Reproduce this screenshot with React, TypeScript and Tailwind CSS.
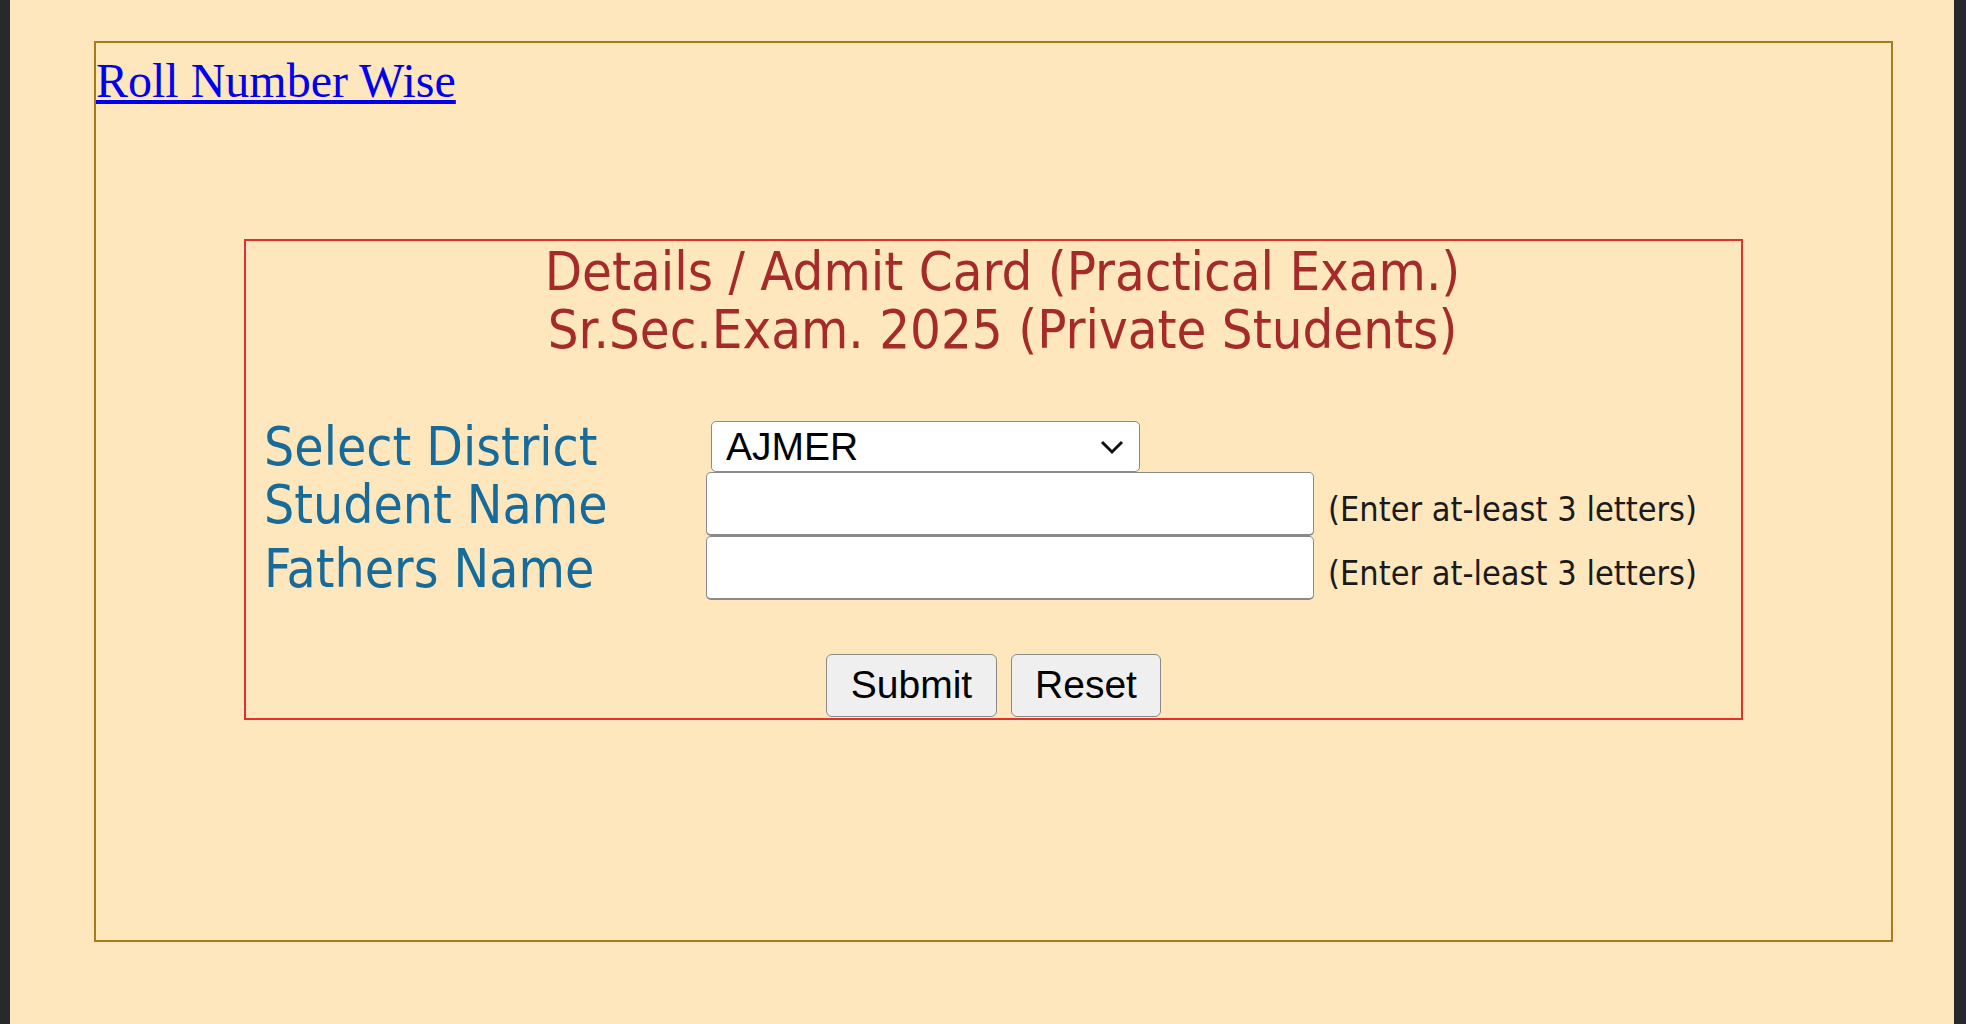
import { useState } from 'react';

const districts = ['AJMER', 'ALWAR', 'BANSWARA', 'BARAN', 'BARMER', 'BHARATPUR', 'BHILWARA', 'BIKANER', 'JAIPUR', 'JODHPUR'];

const tahoma = "font-['DejaVu_Sans_Condensed','DejaVu_Sans',sans-serif]";

export default function App() {
  const [district, setDistrict] = useState('AJMER');
  const [student, setStudent] = useState('');
  const [father, setFather] = useState('');

  return (
    <div className="flex min-h-screen w-full bg-[#27292a]">
      <div className="ml-[10px] h-[1024px] w-[1944px] bg-[#fee7bc] pl-[84px] pt-[41px]">
        <div className="h-[901px] w-[1799px] border-2 border-[#a57c1f]">
          <div className="h-[196px] pt-[10px]">
            <a
              href="#"
              className="font-['Liberation_Serif',serif] text-[48px] leading-[1.15] text-[#0000ee] underline"
            >
              Roll Number Wise
            </a>
          </div>

          <div className="mx-auto h-[481px] w-[1499px] border-2 border-[#e0312c]">
            <div className={`${tahoma} pl-[18px] pt-[2px] text-center text-[54px] leading-[58px] text-[#a52a2a]`}>
              <div>Details / Admit Card (Practical Exam.)</div>
              <div>Sr.Sec.Exam. 2025 (Private Students)</div>
            </div>

            <div className={`${tahoma} mt-[62px] pl-[18px] text-[53px] text-[#166b9b]`}>
              <div className="flex h-[51px] items-center">
                <div className="w-[442px] leading-none">Select District</div>
                <div className="relative ml-[5px] flex">
                  <select
                    value={district}
                    onChange={(e) => setDistrict(e.target.value)}
                    className="h-[51px] w-[429px] appearance-none rounded-[5px] border border-[#8a8a8a] bg-white pl-[14px] font-['Liberation_Sans',sans-serif] text-[39px] leading-none text-black"
                  >
                    {districts.map((d) => (
                      <option key={d}>{d}</option>
                    ))}
                  </select>
                  <svg
                    className="pointer-events-none absolute right-[16px] top-[19px]"
                    width="24"
                    height="15"
                    viewBox="0 0 24 15"
                  >
                    <path d="M2 2 L12 12 L22 2" fill="none" stroke="#111" strokeWidth="3" />
                  </svg>
                </div>
              </div>

              <div className="flex h-[64px] items-center">
                <div className="w-[442px] leading-none">Student Name</div>
                <input
                  value={student}
                  onChange={(e) => setStudent(e.target.value)}
                  className="h-[64px] w-[608px] rounded-[5px] border border-b-2 border-[#8a8a8a] bg-white px-2 font-['Liberation_Sans',sans-serif] text-[39px] text-black outline-none"
                />
                <span className="ml-[14px] mt-[10px] text-[34px] leading-none text-[#1a1a1a]">(Enter at-least 3 letters)</span>
              </div>

              <div className="flex h-[64px] items-center">
                <div className="w-[442px] leading-none">Fathers Name</div>
                <input
                  value={father}
                  onChange={(e) => setFather(e.target.value)}
                  className="h-[64px] w-[608px] rounded-[5px] border border-b-2 border-[#8a8a8a] bg-white px-2 font-['Liberation_Sans',sans-serif] text-[39px] text-black outline-none"
                />
                <span className="ml-[14px] mt-[10px] text-[34px] leading-none text-[#1a1a1a]">(Enter at-least 3 letters)</span>
              </div>
            </div>

            <div className="mt-[54px] flex justify-center gap-[14px] font-['Liberation_Sans',sans-serif] text-[39px] text-black">
              <button className="h-[63px] w-[171px] rounded-[6px] border border-[#8a8a8a] bg-[#efefef]">Submit</button>
              <button
                className="h-[63px] w-[150px] rounded-[6px] border border-[#8a8a8a] bg-[#efefef]"
                onClick={() => {
                  setDistrict('AJMER');
                  setStudent('');
                  setFather('');
                }}
              >
                Reset
              </button>
            </div>
          </div>
        </div>
      </div>
    </div>
  );
}
